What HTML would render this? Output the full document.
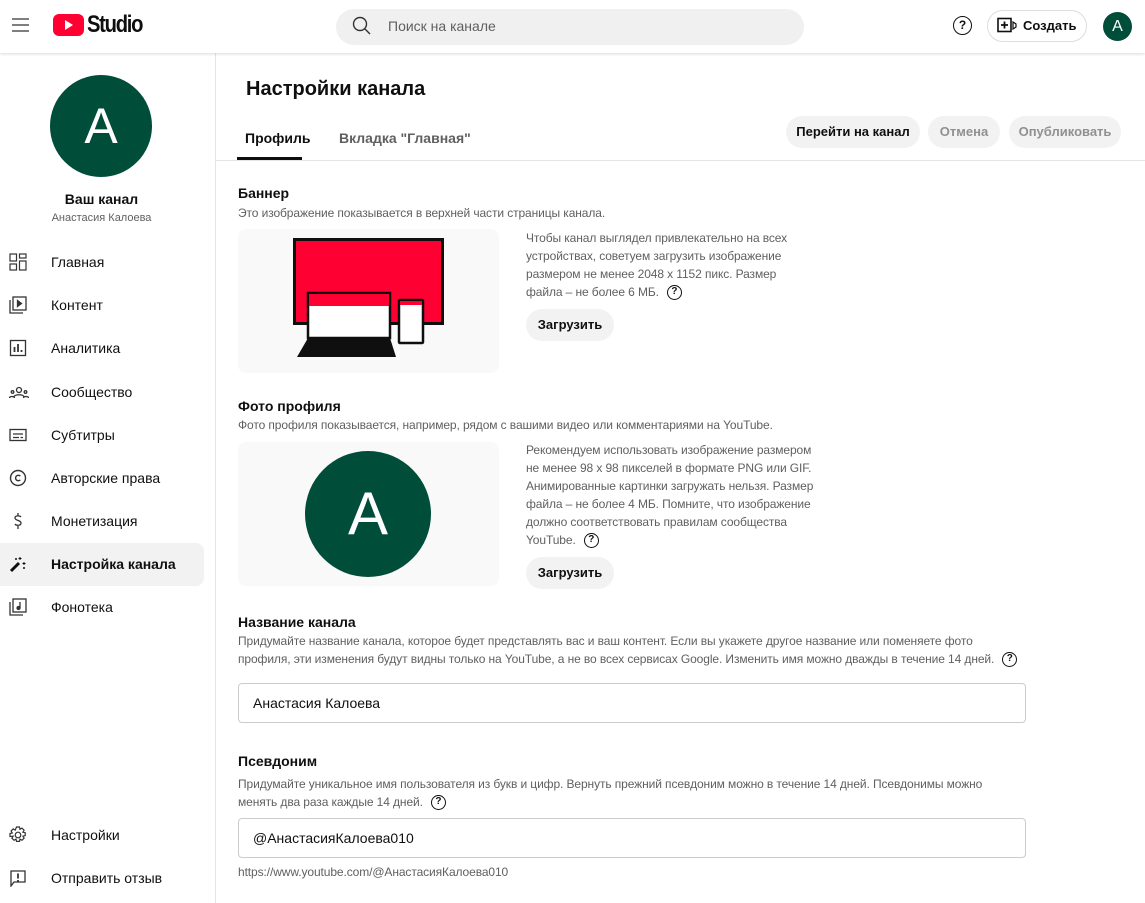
<!DOCTYPE html>
<html><head><meta charset="utf-8">
<style>
*{box-sizing:border-box;margin:0;padding:0}
body{width:1145px;height:903px;overflow:hidden;background:#fff;font-family:"Liberation Sans",Arial,sans-serif;color:#0f0f0f;position:relative}
.a{position:absolute;white-space:nowrap}
.hdr{position:absolute;left:0;top:0;width:1145px;height:53px;background:#fff;box-shadow:0 1px 3px rgba(0,0,0,.15);z-index:2}
.side{position:absolute;left:0;top:53px;width:216px;height:850px;border-right:1px solid #e5e5e5}
.nav{position:absolute;left:0;width:204px;height:43px;font-size:14px;line-height:43px;padding-left:51px}
.nav svg{position:absolute;left:9px;top:12px}
.btn{position:absolute;height:32px;border-radius:16px;background:#f2f2f2;font-size:13px;font-weight:bold;line-height:32px;text-align:center}
.h{font-size:14px;font-weight:bold}
.d{font-size:12px;color:#606060;line-height:18px;letter-spacing:-0.1px}
.box{position:absolute;background:#f9f9f9;border-radius:8px}
.inp{position:absolute;left:238px;width:788px;height:40px;border:1px solid #ccc;border-radius:4px;font-size:14px;line-height:38px;padding-left:14px}
.q{display:inline-block;width:15px;height:15px;border:1.5px solid #0f0f0f;border-radius:50%;font-size:10px;font-weight:bold;line-height:12px;text-align:center;color:#0f0f0f;vertical-align:middle;margin-left:8px}
</style></head><body>
<div class="hdr">
 <svg class="a" style="left:12px;top:18px" width="17" height="14"><path d="M0 1h17M0 7h17M0 13h17" stroke="#333" stroke-width="1.3"/></svg>
 <svg class="a" style="left:53px;top:14px" width="31" height="22"><rect width="31" height="22" rx="6" fill="#ff0033"/><path d="M12 6l8 5-8 5z" fill="#fff"/></svg>
 <div class="a" style="left:87px;top:11px;font-size:24px;font-weight:bold;letter-spacing:-1.5px;transform:scaleX(.84);transform-origin:left">Studio</div>
 <div class="a" style="left:336px;top:9px;width:468px;height:36px;border-radius:18px;background:#f0f0f0"></div>
 <svg class="a" style="left:352px;top:16px" width="20" height="20"><circle cx="8" cy="8" r="6.5" fill="none" stroke="#333" stroke-width="1.4"/><path d="M13 13l5 5" stroke="#333" stroke-width="1.4"/></svg>
 <div class="a" style="left:388px;top:18px;font-size:14px;color:#606060">Поиск на канале</div>
 <div class="a" style="left:953px;top:16px;width:19px;height:19px;border:1.6px solid #0f0f0f;border-radius:50%;font-size:12px;font-weight:bold;text-align:center;line-height:16px">?</div>
 <div class="a" style="left:987px;top:10px;width:100px;height:32px;border:1px solid #ddd;border-radius:16px"></div>
 <svg class="a" style="left:997px;top:17px" width="20" height="17"><rect x="1" y="1.5" width="13" height="13" fill="none" stroke="#0f0f0f" stroke-width="1.6"/><path d="M7.5 4.5v7M4 8h7" stroke="#0f0f0f" stroke-width="1.8"/><path d="M16 5v7l3-2v-3z" fill="none" stroke="#0f0f0f" stroke-width="1.2"/></svg>
 <div class="a" style="left:1023px;top:18px;font-size:13px;font-weight:bold">Создать</div>
 <div class="a" style="left:1103px;top:12px;width:29px;height:29px;border-radius:50%;background:#004d3a;color:#fff;font-size:16px;text-align:center;line-height:29px">A</div>
</div>

<div class="side">
 <div class="a" style="left:50px;top:22px;width:102px;height:102px;border-radius:50%;background:#004d3a;color:#fff;font-size:50px;text-align:center;line-height:102px">A</div>
 <div class="a" style="left:0;width:203px;top:138px;text-align:center;font-size:14px;font-weight:bold">Ваш канал</div>
 <div class="a" style="left:0;width:203px;top:159px;text-align:center;font-size:11px;color:#606060">Анастасия Калоева</div>
</div>
<div class="nav" style="top:241px"><svg width="18" height="18" fill="none" stroke="#333" stroke-width="1.2"><rect x="1" y="1" width="6.5" height="7"/><rect x="10.5" y="1" width="6.5" height="4"/><rect x="1" y="11" width="6.5" height="6"/><rect x="10.5" y="8" width="6.5" height="9"/></svg>Главная</div>
<div class="nav" style="top:284px"><svg width="18" height="18" fill="none" stroke="#333" stroke-width="1.3"><rect x="4" y="1" width="13" height="13"/><path d="M1 4v13h13"/><path d="M8.5 4.5v6l4-3z" fill="#333"/></svg>Контент</div>
<div class="nav" style="top:327px"><svg width="18" height="18" fill="none" stroke="#333" stroke-width="1.3"><rect x="1.5" y="1.5" width="15" height="15"/><path d="M5.5 13V8M9 13V5M12.5 13v-2" stroke-width="1.8"/></svg>Аналитика</div>
<div class="nav" style="top:371px"><svg width="20" height="18" fill="none" stroke="#333" stroke-width="1.3"><circle cx="10" cy="7" r="2.5"/><path d="M5 14c0-3 10-3 10 0"/><circle cx="3.5" cy="9" r="1.3"/><circle cx="16.5" cy="9" r="1.3"/><path d="M0.5 15c0-2 5-2 5 0M14.5 15c0-2 5-2 5 0"/></svg>Сообщество</div>
<div class="nav" style="top:414px"><svg width="18" height="18" fill="none" stroke="#333" stroke-width="1.3"><rect x="1" y="3.5" width="16" height="11"/><path d="M4 8h10M4 11.5h6M11.5 11.5h2.5"/></svg>Субтитры</div>
<div class="nav" style="top:457px"><svg width="18" height="18" fill="none" stroke="#333" stroke-width="1.4"><circle cx="9" cy="9" r="7.5"/><path d="M11.3 7.2a2.7 2.7 0 1 0 0 3.6"/></svg>Авторские права</div>
<div class="nav" style="top:500px"><svg width="18" height="18" fill="none" stroke="#333" stroke-width="1.3"><path d="M12 5c-1-1.5-6-1.8-6 1s6 2 6 5-5 2.7-6 1M9 1v3M9 14v3"/></svg>Монетизация</div>
<div class="nav" style="top:543px;background:#f2f2f2;border-radius:0 8px 8px 0;font-weight:bold"><svg width="18" height="18"><path d="M2 16l8-8" stroke="#0f0f0f" stroke-width="3"/><path d="M11 2v3M9.5 3.5h3M15 7v3M13.5 8.5h3M15 12v2M14 13h2M7 3v2M6 4h2" stroke="#0f0f0f" stroke-width="1"/></svg>Настройка канала</div>
<div class="nav" style="top:586px"><svg width="18" height="18" fill="none" stroke="#333" stroke-width="1.3"><rect x="4" y="1" width="13" height="13"/><path d="M1 4v13h13"/><path d="M11 4v6" /><circle cx="9.5" cy="10" r="1.5" fill="#333"/></svg>Фонотека</div>
<div class="nav" style="top:814px"><svg width="18" height="18" fill="none" stroke="#333" stroke-width="1.2"><circle cx="9" cy="9" r="2.8"/><path d="M7.5 1h3l.5 2.3 2-1.2 2.1 2.1-1.2 2 2.3.5v3l-2.3.5 1.2 2-2.1 2.1-2-1.2-.5 2.3h-3l-.5-2.3-2 1.2-2.1-2.1 1.2-2L1 10.5v-3l2.3-.5-1.2-2 2.1-2.1 2 1.2z"/></svg>Настройки</div>
<div class="nav" style="top:857px"><svg width="18" height="18" fill="none" stroke="#333" stroke-width="1.3"><path d="M2 17V2h14v11H5z"/><path d="M9 4.5v5M9 11v1.5" stroke-width="1.8"/></svg>Отправить отзыв</div>

<div class="a" style="left:246px;top:78px;font-size:20px;font-weight:bold">Настройки канала</div>
<div class="a" style="left:245px;top:130px;font-size:14px;font-weight:bold">Профиль</div>
<div class="a" style="left:237px;top:157px;width:65px;height:3px;background:#0f0f0f"></div>
<div class="a" style="left:339px;top:130px;font-size:14px;font-weight:bold;color:#606060">Вкладка "Главная"</div>
<div class="a" style="left:216px;top:160px;width:929px;height:1px;background:#e5e5e5"></div>
<div class="btn" style="left:786px;top:116px;width:134px">Перейти на канал</div>
<div class="btn" style="left:928px;top:116px;width:72px;color:#909090">Отмена</div>
<div class="btn" style="left:1009px;top:116px;width:112px;color:#909090">Опубликовать</div>

<div class="a h" style="left:238px;top:185px">Баннер</div>
<div class="a d" style="left:238px;top:204px">Это изображение показывается в верхней части страницы канала.</div>
<div class="box" style="left:238px;top:229px;width:261px;height:144px"></div>
<svg class="a" style="left:293px;top:238px" width="152" height="122">
 <rect x="1.5" y="1.5" width="148" height="84" fill="#ff0033" stroke="#0f0f0f" stroke-width="3"/>
 <rect x="15" y="55" width="82" height="45" fill="#fff" stroke="#0f0f0f" stroke-width="2.5"/>
 <rect x="16" y="56" width="80" height="12" fill="#ff0033"/>
 <path d="M15 100h82l6 19H4z" fill="#0f0f0f"/>
 <rect x="106" y="62" width="24" height="43" rx="1" fill="#fff" stroke="#0f0f0f" stroke-width="2.5"/>
 <rect x="107" y="63" width="22" height="4" fill="#ff0033"/>
</svg>
<div class="a d" style="left:526px;top:229px">Чтобы канал выглядел привлекательно на всех<br>устройствах, советуем загрузить изображение<br>размером не менее 2048 x 1152 пикс. Размер<br>файла – не более 6 МБ.<span class="q">?</span></div>
<div class="btn" style="left:526px;top:309px;width:88px">Загрузить</div>

<div class="a h" style="left:238px;top:398px">Фото профиля</div>
<div class="a d" style="left:238px;top:416px">Фото профиля показывается, например, рядом с вашими видео или комментариями на YouTube.</div>
<div class="box" style="left:238px;top:442px;width:261px;height:144px"></div>
<div class="a" style="left:305px;top:451px;width:126px;height:126px;border-radius:50%;background:#004d3a;color:#fff;font-size:60px;text-align:center;line-height:126px">A</div>
<div class="a d" style="left:526px;top:441px">Рекомендуем использовать изображение размером<br>не менее 98 x 98 пикселей в формате PNG или GIF.<br>Анимированные картинки загружать нельзя. Размер<br>файла – не более 4 МБ. Помните, что изображение<br>должно соответствовать правилам сообщества<br>YouTube.<span class="q">?</span></div>
<div class="btn" style="left:526px;top:557px;width:88px">Загрузить</div>

<div class="a h" style="left:238px;top:614px">Название канала</div>
<div class="a d" style="left:238px;top:632px">Придумайте название канала, которое будет представлять вас и ваш контент. Если вы укажете другое название или поменяете фото<br>профиля, эти изменения будут видны только на YouTube, а не во всех сервисах Google. Изменить имя можно дважды в течение 14 дней.<span class="q">?</span></div>
<div class="inp" style="top:683px">Анастасия Калоева</div>

<div class="a h" style="left:238px;top:753px">Псевдоним</div>
<div class="a d" style="left:238px;top:775px">Придумайте уникальное имя пользователя из букв и цифр. Вернуть прежний псевдоним можно в течение 14 дней. Псевдонимы можно<br>менять два раза каждые 14 дней.<span class="q">?</span></div>
<div class="inp" style="top:818px">@АнастасияКалоева010</div>
<div class="a d" style="left:238px;top:863px">https://www.youtube.com/@АнастасияКалоева010</div>
</body></html>
